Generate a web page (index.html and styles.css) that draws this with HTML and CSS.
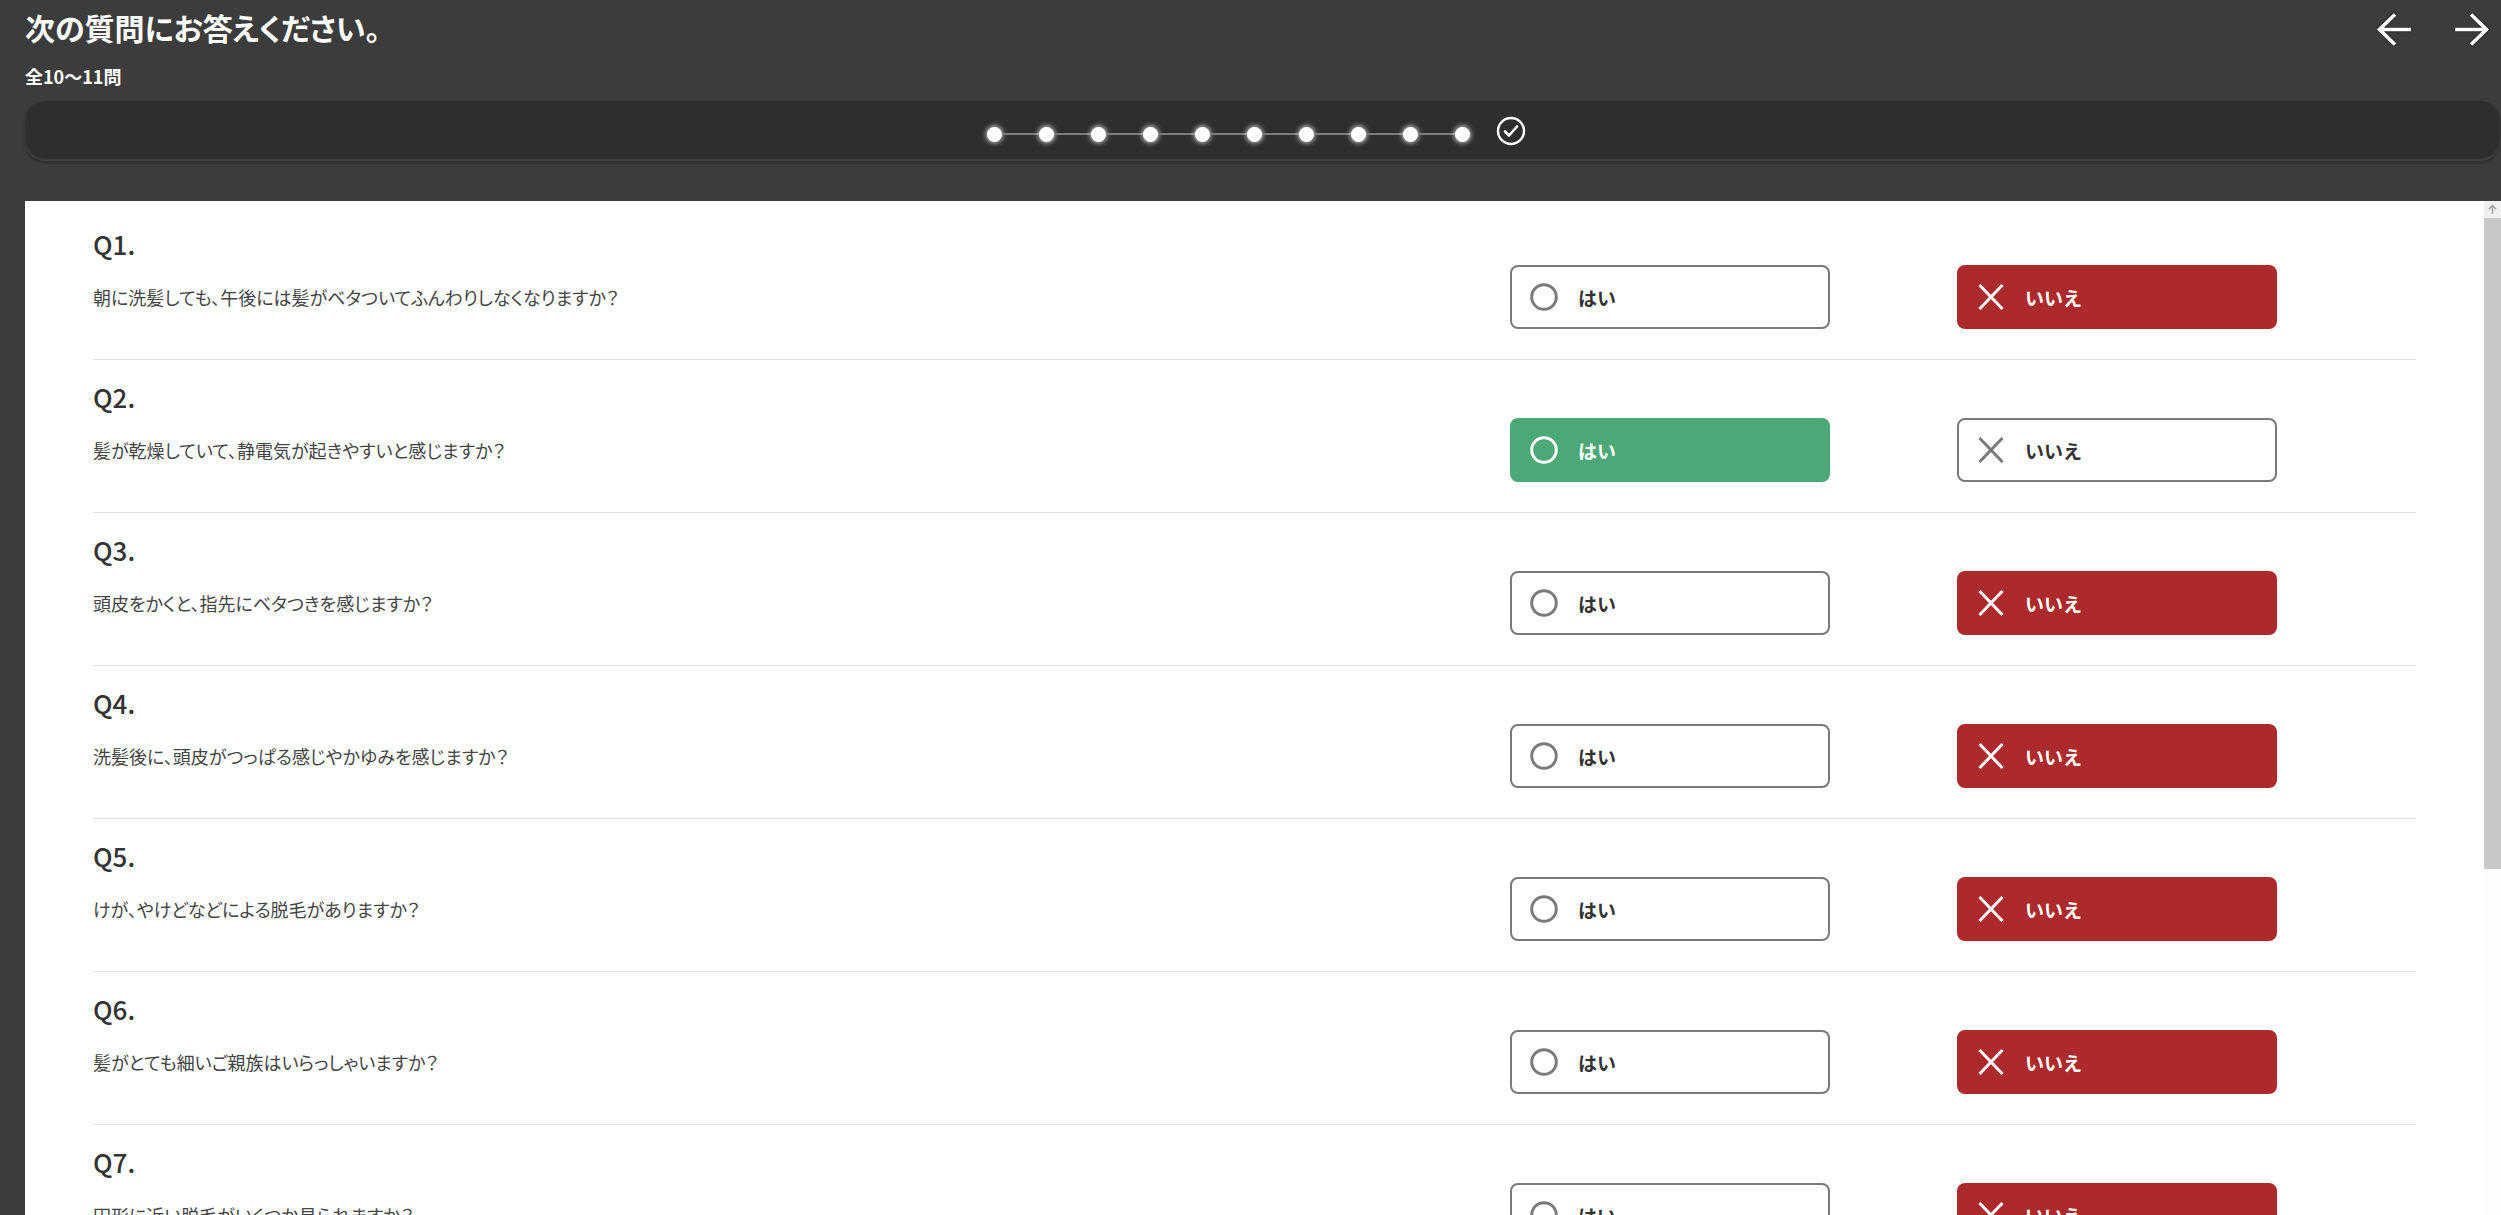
FILE: index.html
```html
<!DOCTYPE html>
<html lang="ja">
<head>
<meta charset="utf-8">
<title>質問</title>
<link rel="stylesheet" href="styles.css">
</head>
<body>
<header class="header">
  <div class="header-top">
    <div class="heading">
      <h1 class="title">次の質問にお答えください。</h1>
      <p class="subtitle">全10〜11問</p>
    </div>
    <nav class="nav">
      <button class="nav-btn" aria-label="戻る">
        <svg viewBox="0 0 36 36" width="36" height="36"><path d="M35 17.5H3.5M19 2.5L3.5 17.5L19 32.5" fill="none" stroke="#fff" stroke-width="3.6" stroke-linejoin="miter"/></svg>
      </button>
      <button class="nav-btn" aria-label="次へ">
        <svg viewBox="0 0 36 36" width="36" height="36"><path d="M1 17.5H32.5M17 2.5L32.5 17.5L17 32.5" fill="none" stroke="#fff" stroke-width="3.6" stroke-linejoin="miter"/></svg>
      </button>
    </nav>
  </div>
  <div class="progress">
    <div class="steps">
      <span class="dot"></span><span class="link"></span>
      <span class="dot"></span><span class="link"></span>
      <span class="dot"></span><span class="link"></span>
      <span class="dot"></span><span class="link"></span>
      <span class="dot"></span><span class="link"></span>
      <span class="dot"></span><span class="link"></span>
      <span class="dot"></span><span class="link"></span>
      <span class="dot"></span><span class="link"></span>
      <span class="dot"></span><span class="link"></span>
      <span class="dot"></span>
    </div>
    <svg class="done" viewBox="0 0 30 30" width="30" height="30"><circle cx="15" cy="15" r="13" fill="none" stroke="#fff" stroke-width="2.4"/><path d="M9 15.5L13 19.5L21 10.5" fill="none" stroke="#fff" stroke-width="2.6" stroke-linecap="round" stroke-linejoin="round"/></svg>
  </div>
</header>

<div class="content">
  <main class="list">
    <section class="question">
      <h2 class="q-label">Q1.</h2>
      <div class="q-line">
        <p class="q-text">朝に洗髪しても、午後には髪がベタついてふんわりしなくなりますか？</p>
        <div class="answers">
          <button class="answer"><svg class="icon" viewBox="0 0 28 28"><circle cx="14" cy="14" r="12.3"/></svg><span>はい</span></button>
          <button class="answer answer-no is-selected"><svg class="icon" viewBox="0 0 28 28"><path d="M2.5 2L25.5 26M25.5 2L2.5 26"/></svg><span>いいえ</span></button>
        </div>
      </div>
    </section>
    <section class="question">
      <h2 class="q-label">Q2.</h2>
      <div class="q-line">
        <p class="q-text">髪が乾燥していて、静電気が起きやすいと感じますか？</p>
        <div class="answers">
          <button class="answer answer-yes is-selected"><svg class="icon" viewBox="0 0 28 28"><circle cx="14" cy="14" r="12.3"/></svg><span>はい</span></button>
          <button class="answer"><svg class="icon" viewBox="0 0 28 28"><path d="M2.5 2L25.5 26M25.5 2L2.5 26"/></svg><span>いいえ</span></button>
        </div>
      </div>
    </section>
    <section class="question">
      <h2 class="q-label">Q3.</h2>
      <div class="q-line">
        <p class="q-text">頭皮をかくと、指先にベタつきを感じますか？</p>
        <div class="answers">
          <button class="answer"><svg class="icon" viewBox="0 0 28 28"><circle cx="14" cy="14" r="12.3"/></svg><span>はい</span></button>
          <button class="answer answer-no is-selected"><svg class="icon" viewBox="0 0 28 28"><path d="M2.5 2L25.5 26M25.5 2L2.5 26"/></svg><span>いいえ</span></button>
        </div>
      </div>
    </section>
    <section class="question">
      <h2 class="q-label">Q4.</h2>
      <div class="q-line">
        <p class="q-text">洗髪後に、頭皮がつっぱる感じやかゆみを感じますか？</p>
        <div class="answers">
          <button class="answer"><svg class="icon" viewBox="0 0 28 28"><circle cx="14" cy="14" r="12.3"/></svg><span>はい</span></button>
          <button class="answer answer-no is-selected"><svg class="icon" viewBox="0 0 28 28"><path d="M2.5 2L25.5 26M25.5 2L2.5 26"/></svg><span>いいえ</span></button>
        </div>
      </div>
    </section>
    <section class="question">
      <h2 class="q-label">Q5.</h2>
      <div class="q-line">
        <p class="q-text">けが、やけどなどによる脱毛がありますか？</p>
        <div class="answers">
          <button class="answer"><svg class="icon" viewBox="0 0 28 28"><circle cx="14" cy="14" r="12.3"/></svg><span>はい</span></button>
          <button class="answer answer-no is-selected"><svg class="icon" viewBox="0 0 28 28"><path d="M2.5 2L25.5 26M25.5 2L2.5 26"/></svg><span>いいえ</span></button>
        </div>
      </div>
    </section>
    <section class="question">
      <h2 class="q-label">Q6.</h2>
      <div class="q-line">
        <p class="q-text">髪がとても細いご親族はいらっしゃいますか？</p>
        <div class="answers">
          <button class="answer"><svg class="icon" viewBox="0 0 28 28"><circle cx="14" cy="14" r="12.3"/></svg><span>はい</span></button>
          <button class="answer answer-no is-selected"><svg class="icon" viewBox="0 0 28 28"><path d="M2.5 2L25.5 26M25.5 2L2.5 26"/></svg><span>いいえ</span></button>
        </div>
      </div>
    </section>
    <section class="question">
      <h2 class="q-label">Q7.</h2>
      <div class="q-line">
        <p class="q-text">円形に近い脱毛がいくつか見られますか？</p>
        <div class="answers">
          <button class="answer"><svg class="icon" viewBox="0 0 28 28"><circle cx="14" cy="14" r="12.3"/></svg><span>はい</span></button>
          <button class="answer answer-no is-selected"><svg class="icon" viewBox="0 0 28 28"><path d="M2.5 2L25.5 26M25.5 2L2.5 26"/></svg><span>いいえ</span></button>
        </div>
      </div>
    </section>
  </main>
  <div class="scrollbar" aria-hidden="true">
    <div class="scroll-up">
      <svg viewBox="0 0 17 17" width="17" height="17"><path d="M8.5 4.5V13M4.8 8.2L8.5 4.5L12.2 8.2" fill="none" stroke="#a6a6a6" stroke-width="1.6"/></svg>
    </div>
    <div class="scroll-thumb"></div>
  </div>
</div>
</body>
</html>
```

FILE: styles.css
```css
* {
  box-sizing: border-box;
}

html,
body {
  height: 100%;
}

body {
  margin: 0;
  overflow: hidden;
  background: #3c3c3c;
  color: #333;
  font-family: "Noto Sans CJK JP", "Noto Sans", sans-serif;
  font-feature-settings: "palt";
}

/* ---------- header ---------- */
.header {
  color: #fff;
}

.header-top {
  display: flex;
  justify-content: space-between;
  align-items: flex-start;
  padding: 0 11px 0 25px;
}

.title {
  margin: 7px 0 0;
  font-size: 30px;
  line-height: 40px;
  font-weight: 700;
}

.subtitle {
  margin: 17px 0 0;
  font-size: 18px;
  line-height: 24px;
  font-weight: 700;
}

.nav {
  display: flex;
  gap: 42px;
  margin-top: 12px;
}

.nav-btn {
  display: block;
  padding: 0;
  border: 0;
  background: none;
  width: 36px;
  height: 36px;
  cursor: pointer;
}

.nav-btn svg {
  display: block;
  filter: drop-shadow(0 0 1px rgba(0, 0, 0, 0.7));
}

/* ---------- progress ---------- */
.progress {
  display: flex;
  justify-content: center;
  align-items: center;
  gap: 26px;
  height: 60px;
  margin: 13px 1px 0 25px;
  padding-right: 12px;
  border-radius: 20px;
  background: #2e2e2e;
  box-shadow: inset 0 -2px 2px rgba(255, 255, 255, 0.1), 0 2px 3px rgba(0, 0, 0, 0.25);
}

.steps {
  display: flex;
  align-items: center;
  padding-top: 6px;
}

.dot {
  width: 15px;
  height: 15px;
  border-radius: 50%;
  background: #fff;
  box-shadow: 0 0 5px 1px rgba(255, 255, 255, 0.75);
}

.link {
  width: 37px;
  height: 2px;
  background: #7c7c7c;
}

.done {
  display: block;
}

/* ---------- question list ---------- */
.content {
  display: flex;
  height: calc(100vh - 201px);
  margin: 40px 0 0 25px;
  background: #fff;
}

.list {
  flex: 1;
  min-width: 0;
  overflow: hidden;
  padding: 6px 68px 17px;
}

.scrollbar {
  display: flex;
  flex-direction: column;
  width: 17px;
  flex-shrink: 0;
  background: #fdfdfd;
}

.scroll-up {
  height: 17px;
  background: #f0f0f0;
}

.scroll-up svg {
  display: block;
}

.scroll-thumb {
  height: 651px;
  background: #c8c8c8;
}

.question {
  padding: 20px 0 30px;
  border-bottom: 1px solid #e2e2e2;
}

.q-label {
  margin: 0;
  font-size: 26px;
  line-height: 34px;
  font-weight: 500;
  color: #333;
}

.q-line {
  display: flex;
  align-items: center;
  margin-top: 4px;
}

.q-text {
  flex: 1;
  margin: 0;
  font-size: 18px;
  line-height: 24px;
  color: #444;
}

.answers {
  display: flex;
  gap: 127px;
  margin-right: 139px;
}

.answer {
  display: flex;
  align-items: center;
  gap: 20px;
  width: 320px;
  height: 64px;
  padding: 0 0 0 18px;
  border: 2px solid #7a7a7a;
  border-radius: 8px;
  background: #fff;
  color: #333;
  font-family: inherit;
  font-size: 19px;
  font-weight: 700;
  cursor: pointer;
}

.icon {
  width: 28px;
  height: 28px;
  fill: none;
  stroke: #7a7a7a;
  stroke-width: 3;
}

.answer-no.is-selected {
  background: #ad2a2c;
  border-color: #ad2a2c;
  color: #fff;
}

.answer-yes.is-selected {
  background: #4ca876;
  border-color: #4ca876;
  color: #fff;
}

.is-selected .icon {
  stroke: #fff;
}
```
